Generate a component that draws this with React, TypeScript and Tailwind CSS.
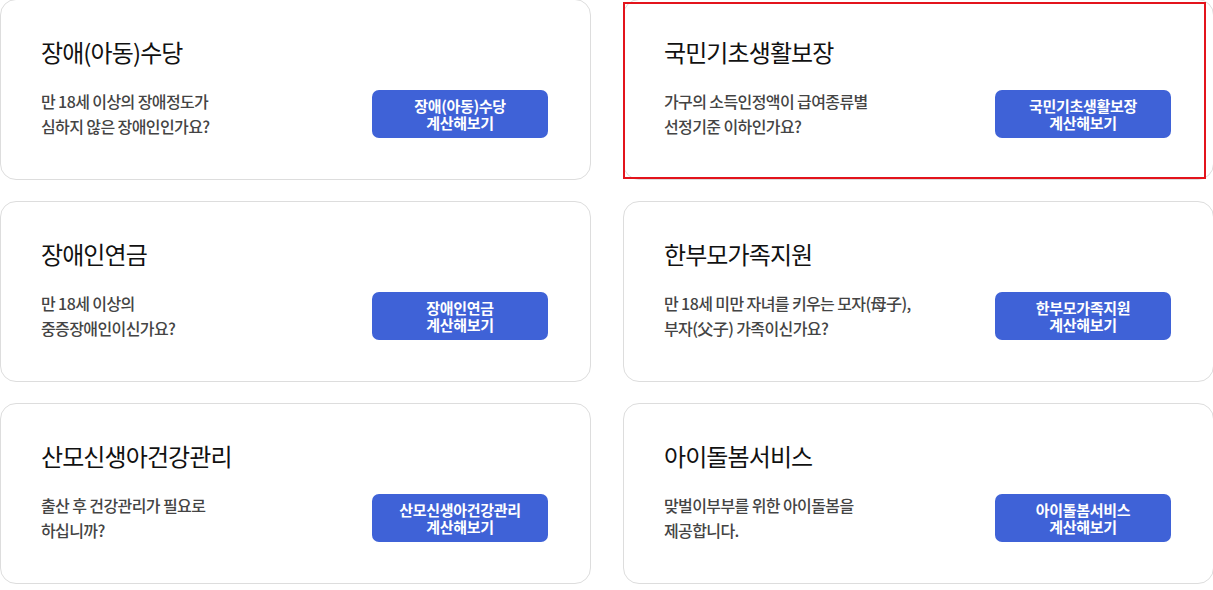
const cards = [
  {
    title: "장애(아동)수당",
    desc: ["만 18세 이상의 장애정도가", "심하지 않은 장애인인가요?"],
  },
  {
    title: "국민기초생활보장",
    desc: ["가구의 소득인정액이 급여종류별", "선정기준 이하인가요?"],
    selected: true,
  },
  {
    title: "장애인연금",
    desc: ["만 18세 이상의", "중증장애인이신가요?"],
  },
  {
    title: "한부모가족지원",
    desc: ["만 18세 미만 자녀를 키우는 모자(母子),", "부자(父子) 가족이신가요?"],
  },
  {
    title: "산모신생아건강관리",
    desc: ["출산 후 건강관리가 필요로", "하십니까?"],
  },
  {
    title: "아이돌봄서비스",
    desc: ["맞벌이부부를 위한 아이돌봄을", "제공합니다."],
  },
];

export default function App() {
  return (
    <div
      className="w-[1213px] h-[590px] overflow-hidden bg-white"
      style={{ fontFamily: '"Noto Sans CJK KR", "Noto Sans", sans-serif' }}
    >
      <div className="grid grid-cols-[591px_591px] gap-x-[32px] gap-y-[21px] -mt-px">
        {cards.map((card) => (
          <div
            key={card.title}
            className="relative h-[181px] rounded-2xl border border-[#dddddd] bg-white pl-10 pr-[42px] pt-[36px]"
          >
            {card.selected && (
              <div className="absolute left-[-1px] top-[2px] w-[583px] h-[177px] border-2 border-[#e3141c]" />
            )}
            <h2 className="text-[24px] leading-[32px] text-[#111111] tracking-[-0.9px]">{card.title}</h2>
            <div className="mt-[21px] flex items-center justify-between">
              <p className="text-[16px] leading-[25px] font-medium text-[#444444] tracking-[-0.6px]">
                {card.desc[0]}
                <br />
                {card.desc[1]}
              </p>
              <button className="w-[176px] h-[48px] rounded-[7px] bg-[#3f62d7] text-white text-[15px] leading-[17px] font-bold tracking-[-0.3px]">
                {card.title}
                <br />
                계산해보기
              </button>
            </div>
          </div>
        ))}
      </div>
    </div>
  );
}
